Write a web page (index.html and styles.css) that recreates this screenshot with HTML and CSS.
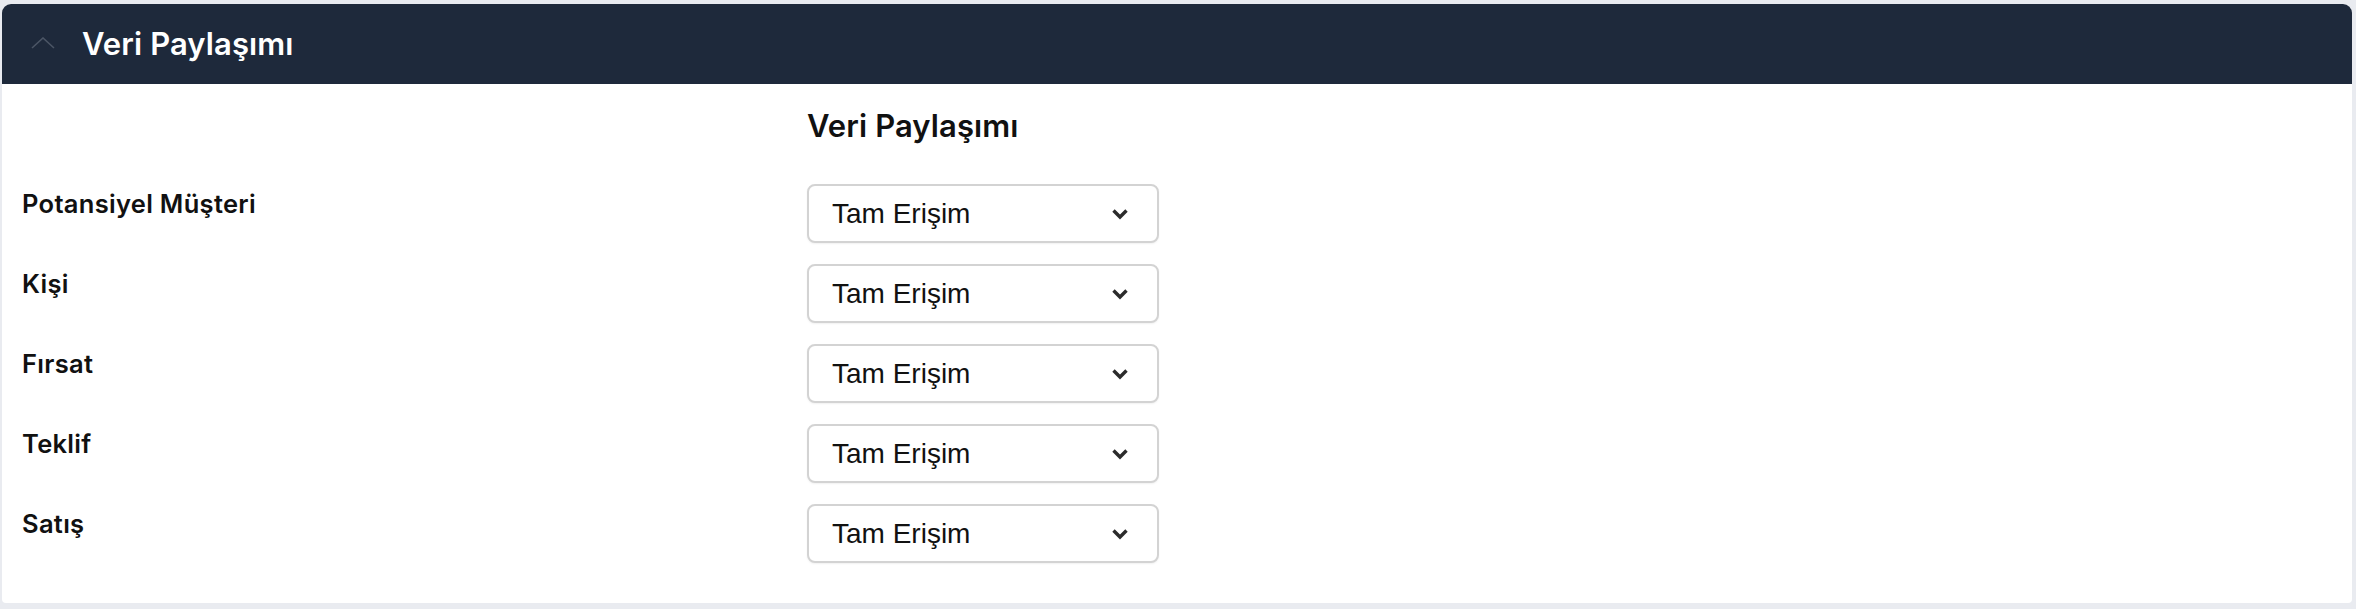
FILE: index.html
```html
<!DOCTYPE html>
<html lang="tr">
<head>
<meta charset="utf-8">
<title>Veri Paylaşımı</title>
<link rel="stylesheet" href="styles.css">
</head>
<body>
<section class="card">
  <header class="card-header">
    <svg class="collapse-icon" width="24" height="12" viewBox="0 0 24 12" aria-hidden="true"><path d="M1 11 L12 1 L23 11" fill="none" stroke="#4b5565" stroke-width="1.6"/></svg>
    <h2 class="card-title">Veri Paylaşımı</h2>
  </header>
  <div class="card-body">
    <div class="grid">
      <div class="label-col"></div>
      <h3 class="section-title">Veri Paylaşımı</h3>
    </div>
    <div class="rows">
      <div class="row">
        <div class="label">Potansiyel Müşteri</div>
        <div class="select-wrap"><select class="select"><option>Tam Erişim</option></select><svg class="chev" width="18" height="12" viewBox="0 0 18 12"><path d="M2.5 2.5 L9 9 L15.5 2.5" fill="none" stroke="#2b2b2b" stroke-width="3.4"/></svg></div>
      </div>
      <div class="row">
        <div class="label">Kişi</div>
        <div class="select-wrap"><select class="select"><option>Tam Erişim</option></select><svg class="chev" width="18" height="12" viewBox="0 0 18 12"><path d="M2.5 2.5 L9 9 L15.5 2.5" fill="none" stroke="#2b2b2b" stroke-width="3.4"/></svg></div>
      </div>
      <div class="row">
        <div class="label">Fırsat</div>
        <div class="select-wrap"><select class="select"><option>Tam Erişim</option></select><svg class="chev" width="18" height="12" viewBox="0 0 18 12"><path d="M2.5 2.5 L9 9 L15.5 2.5" fill="none" stroke="#2b2b2b" stroke-width="3.4"/></svg></div>
      </div>
      <div class="row">
        <div class="label">Teklif</div>
        <div class="select-wrap"><select class="select"><option>Tam Erişim</option></select><svg class="chev" width="18" height="12" viewBox="0 0 18 12"><path d="M2.5 2.5 L9 9 L15.5 2.5" fill="none" stroke="#2b2b2b" stroke-width="3.4"/></svg></div>
      </div>
      <div class="row">
        <div class="label">Satış</div>
        <div class="select-wrap"><select class="select"><option>Tam Erişim</option></select><svg class="chev" width="18" height="12" viewBox="0 0 18 12"><path d="M2.5 2.5 L9 9 L15.5 2.5" fill="none" stroke="#2b2b2b" stroke-width="3.4"/></svg></div>
      </div>
    </div>
  </div>
</section>
</body>
</html>
```
FILE: styles.css
```css
* { box-sizing: border-box; }
html, body { margin: 0; }
body {
  background: #e9ebf0;
  padding: 4px 4px 6px 2px;
  font-family: Inter, "Noto Sans", sans-serif;
}
.card {
  background: #ffffff;
  border-radius: 9px 9px 4px 4px;
  overflow: hidden;
  height: 599px;
}
.card-header {
  background: #1e293b;
  height: 80px;
  display: flex;
  align-items: center;
  padding-left: 29px;
  gap: 27px;
}
.collapse-icon { display: block; margin-top: -2px; }
.card-title {
  margin: 0;
  color: #ffffff;
  font-size: 31px;
  font-weight: 600;
  line-height: 36px;
  letter-spacing: 0.1px;
}
.card-body {
  padding: 24px 21px 40px 20px;
}
.grid {
  display: flex;
}
.label-col { width: 785px; flex: none; }
.section-title {
  margin: 0;
  font-size: 31px;
  font-weight: 600;
  line-height: 36px;
  color: #111111;
  letter-spacing: 0.1px;
}
.rows {
  margin-top: 40px;
  display: flex;
  flex-direction: column;
  gap: 21px;
}
.row {
  display: flex;
  align-items: flex-start;
}
.label {
  width: 785px;
  flex: none;
  padding-top: 2px;
  font-size: 25.5px;
  font-weight: 600;
  line-height: 36px;
  letter-spacing: 0.3px;
  color: #111111;
}
.select-wrap {
  position: relative;
  width: 352px;
  height: 59px;
}
.select {
  appearance: none;
  -webkit-appearance: none;
  width: 100%;
  height: 100%;
  margin: 0;
  border: 2px solid #d3d3d3;
  border-radius: 8px;
  background: #ffffff;
  box-shadow: 0 1px 2px rgba(0, 0, 0, 0.06);
  padding: 0 50px 0 23px;
  font-family: "Liberation Sans", Arial, sans-serif;
  font-size: 28px;
  color: #111111;
}
.chev {
  position: absolute;
  right: 30px;
  top: 24px;
  pointer-events: none;
}
```
